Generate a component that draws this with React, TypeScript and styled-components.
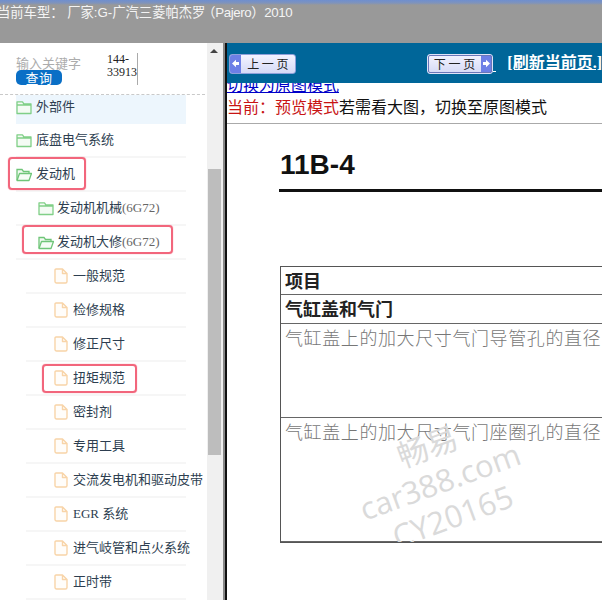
import React from "react";
import styled, { createGlobalStyle } from "styled-components";

const CJK = `"Noto Sans CJK SC", "Liberation Sans", sans-serif`;
const MIXED = `"Liberation Serif", "Noto Sans CJK SC", serif`;

const Global = createGlobalStyle`
  html, body { margin: 0; padding: 0; background: #fff; }
  body { width: 602px; height: 600px; overflow: hidden; font-family: ${CJK}; }
`;

const Page = styled.div`
  width: 602px;
  height: 600px;
  overflow: hidden;
  display: flex;
  flex-direction: column;
`;

const TopBar = styled.div`
  height: 43px;
  flex: none;
  box-sizing: border-box;
  background: linear-gradient(#6f8fcf 0, #7f93bb 3px, #999 5px);
  color: #f4f4f4;
  font-family: "Liberation Sans", "Noto Sans CJK SC", sans-serif;
  font-size: 13.3px;
  line-height: 25px;
  white-space: nowrap;
  text-indent: -3px;
  overflow: hidden;
`;

const ModelName = styled.span`
  letter-spacing: -0.4px;
  margin-left: -3px;
`;

const Main = styled.div`
  flex: 1;
  display: flex;
  min-height: 0;
`;

const Sidebar = styled.aside`
  width: 207px;
  flex: none;
  overflow: hidden;
`;

const Search = styled.div`
  height: 52px;
  box-sizing: border-box;
  border-bottom: 1px dashed #c9c9c9;
  margin-right: 2px;
  padding: 10px 0 0 16px;
  display: flex;
`;

const SearchLeft = styled.div`
  width: 91px;
  flex: none;
  padding-top: 3px;
`;

const Hint = styled.div`
  color: #acacac;
  font-size: 13px;
  line-height: 14px;
`;

const QueryButton = styled.div`
  width: 46px;
  height: 15px;
  border-radius: 5px;
  background: #0a6fc6;
  color: #fff;
  font-size: 13px;
  line-height: 15px;
  text-align: center;
  letter-spacing: 0.5px;
`;

const Code = styled.div`
  width: 30px;
  height: 32px;
  border-right: 1px solid #aaa;
  font-family: "Liberation Serif", serif;
  font-size: 12px;
  line-height: 12.5px;
  color: #222;
  word-break: break-word;
`;

const Row = styled.div<{ $level: number; $active?: boolean; $clip?: boolean }>`
  position: relative;
  box-sizing: border-box;
  height: ${(p) => (p.$clip ? 29 : 34)}px;
  width: ${(p) => (p.$level === 2 ? 160 : 170)}px;
  margin-left: ${(p) => (p.$level === 2 ? 26 : 16)}px;
  padding-left: ${(p) => (p.$level === 0 ? 0 : p.$level === 1 ? 22 : 28)}px;
  padding-bottom: ${(p) => (p.$clip ? 5 : 0)}px;
  display: flex;
  align-items: center;
  gap: ${(p) => (p.$level === 0 ? 4 : p.$level === 1 ? 3 : 5)}px;
  background: ${(p) => (p.$active ? "#edf6fd" : "transparent")};
  border-bottom: ${(p) => (p.$active ? "0" : "2px solid #f6f6f6")};
  white-space: nowrap;
  color: #2d3e50;
  font-family: ${MIXED};
  font-size: 13px;
  line-height: 16px;
`;

const Suffix = styled.span`
  color: #666;
`;

const Highlight = styled.div<{ $left: number; $width: number; $top: number; $height: number }>`
  position: absolute;
  left: ${(p) => p.$left}px;
  top: ${(p) => p.$top}px;
  width: ${(p) => p.$width}px;
  height: ${(p) => p.$height}px;
  box-sizing: border-box;
  border: 2.5px solid #f2667c;
  border-radius: 4px;
  box-shadow: 0 0 1px #f2667c;
`;

const Track = styled.div`
  width: 16px;
  flex: none;
  background: #f0f0f0;
  display: flex;
  flex-direction: column;
  align-items: center;
  padding: 6px 2px 0 0;
  box-sizing: border-box;
`;

const Arrow = styled.div`
  width: 0;
  height: 0;
  border-left: 4px solid transparent;
  border-right: 4px solid transparent;
  border-bottom: 4px solid #444;
`;

const Thumb = styled.div`
  width: 13px;
  height: 286px;
  margin-top: 116px;
  background: #bdbdbd;
`;

const Divider = styled.div`
  width: 4px;
  flex: none;
  background: linear-gradient(90deg, #888 0, #888 2px, #111 2px, #111 4px);
`;

const Content = styled.main`
  flex: 1;
  min-width: 0;
  overflow: hidden;
`;

const NavBar = styled.div`
  height: 40px;
  background: #006699;
  display: flex;
  align-items: center;
  padding: 0 0 0 2px;
  white-space: nowrap;
`;

const NavButton = styled.div<{ $next?: boolean }>`
  width: 67px;
  height: 20px;
  box-sizing: border-box;
  margin-top: 1px;
  margin-left: ${(p) => (p.$next ? "131px" : "0")};
  border: 1px solid ${(p) => (p.$next ? "#dfe3f8" : "#8ea0da")};
  outline: ${(p) => (p.$next ? "1px solid #6a76b8" : "none")};
  outline-offset: -2px;
  border-radius: 3px;
  background: linear-gradient(#f3f3ff, #d5daf6);
  display: flex;
  flex-direction: ${(p) => (p.$next ? "row-reverse" : "row")};
  align-items: center;
  overflow: hidden;
  color: #222;
  font-size: 12px;
`;

const NavIcon = styled.div`
  width: 11px;
  height: 100%;
  flex: none;
  background: #6d7fe6;
  display: flex;
  align-items: center;
  justify-content: center;
`;

const NavLabel = styled.div`
  flex: 1;
  text-align: center;
  white-space: pre;
  line-height: 16px;
`;

const NavUnder = styled.span`
  display: inline-block;
  align-self: flex-end;
  width: 3px;
  height: 1px;
  margin: 0 0 11px 0;
  background: #fff;
`;

const Refresh = styled.a`
  margin-left: 11px;
  color: #fff;
  font-weight: 700;
  font-size: 16px;
  text-decoration: underline;
  line-height: 18px;
  font-family: ${MIXED};
`;

const ClipTop = styled.div`
  height: 11px;
  overflow: hidden;
`;

const SwitchLink = styled.a`
  display: block;
  height: 14px;
  margin-top: -6px;
  color: #0000c8;
  font-size: 16px;
  line-height: 14px;
  text-decoration: underline;
  white-space: nowrap;
`;

const ModeLine = styled.div`
  height: 30px;
  box-sizing: border-box;
  border-bottom: 1px solid #aaa;
  padding-top: 2px;
  font-size: 16px;
  line-height: 20px;
  color: #111;
  white-space: nowrap;
`;

const Red = styled.span`
  color: #c81414;
`;

const Doc = styled.div`
  padding: 26px 0 0 52px;
  width: 380px;
`;

const DocTitle = styled.div`
  font-family: "Liberation Sans", sans-serif;
  font-weight: 700;
  font-size: 28px;
  line-height: 30px;
  padding-left: 1px;
  color: #111;
`;

const DocRule = styled.div`
  height: 3px;
  background: #111;
  margin-top: 9px;
`;

const DocTable = styled.div`
  position: relative;
  overflow: hidden;
  margin-top: 74px;
  margin-left: 1px;
  border: solid #555;
  border-width: 1.5px 0 1.5px 1.5px;
`;

const DocRow = styled.div<{ $h: number; $head?: boolean }>`
  height: ${(p) => p.$h}px;
  box-sizing: border-box;
  padding-left: 4px;
  border-bottom: 1px solid #666;
  font-size: 18px;
  line-height: 26px;
  white-space: nowrap;
  color: ${(p) => (p.$head ? "#222" : "#777")};
  font-weight: ${(p) => (p.$head ? 700 : 300)};
  letter-spacing: ${(p) => (p.$head ? 0 : 0.6)}px;
  &:last-child { border-bottom: 0; }
`;

const Watermark = styled.div`
  position: absolute;
  left: 64px;
  top: 159px;
  width: 190px;
  transform: rotate(-20deg);
  text-align: center;
  color: #dadada;
  font-family: "Open Sans", "Noto Sans CJK SC", sans-serif;
  font-size: 31px;
  line-height: 37px;
  white-space: nowrap;
`;

const FolderIcon = ({ open }: { open?: boolean }) => (
  <svg width="16" height="15" viewBox="0 0 16 15" style={{ flex: "none" }}>
    {open ? (
      <>
        <path d="M1 13V2.5h5l1.5 2H13V6" fill="#f2faf2" stroke="#6fc578" strokeWidth="1.3" />
        <path d="M1 13.5 3.5 6.5H15.5L13 13.5Z" fill="#f6fcf6" stroke="#6fc578" strokeWidth="1.3" strokeLinejoin="round" />
      </>
    ) : (
      <path d="M1 13.5V1.8h5.5l1.3 2H15v9.7Z M1 5h14" fill="#f4fbf4" stroke="#80cf87" strokeWidth="1.3" strokeLinejoin="round" />
    )}
  </svg>
);

const FileIcon = () => (
  <svg width="14" height="16" viewBox="0 0 14 16" style={{ flex: "none" }}>
    <path
      d="M2 1h6.5L13 5.5V13.5a1.5 1.5 0 0 1-1.5 1.5H2.5A1.5 1.5 0 0 1 1 13.5V2a1 1 0 0 1 1-1Z M8.5 1v4.5H13"
      fill="#fffdfa"
      stroke="#f8d4a8"
      strokeWidth="1.4"
      strokeLinejoin="round"
    />
  </svg>
);

const ArrowIcon = ({ right }: { right?: boolean }) => (
  <svg width="9" height="9" viewBox="0 0 9 9">
    <path d={right ? "M1 3h3V.8L8 4.5 4 8.2V6H1Z" : "M8 3H5V.8L1 4.5 5 8.2V6h3Z"} fill="#fff" />
  </svg>
);

type Item = {
  label: string;
  suffix?: string;
  level: 0 | 1 | 2;
  open?: boolean;
  hl?: { left: number; top: number; width: number; height: number };
};

const items: Item[] = [
  { label: "底盘电气系统", level: 0 },
  { label: "发动机", level: 0, open: true, hl: { left: -8, top: -1, width: 78, height: 33 } },
  { label: "发动机机械", suffix: "(6G72)", level: 1 },
  { label: "发动机大修", suffix: "(6G72)", level: 1, open: true, hl: { left: 6, top: -1, width: 151, height: 29 } },
  { label: "一般规范", level: 2 },
  { label: "检修规格", level: 2 },
  { label: "修正尺寸", level: 2 },
  { label: "扭矩规范", level: 2, hl: { left: 16, top: 2, width: 95, height: 29 } },
  { label: "密封剂", level: 2 },
  { label: "专用工具", level: 2 },
  { label: "交流发电机和驱动皮带", level: 2 },
  { label: "EGR 系统", level: 2 },
  { label: "进气岐管和点火系统", level: 2 },
  { label: "正时带", level: 2 },
];

export default function App() {
  return (
    <Page>
      <Global />
      <TopBar>
        当前车型： 厂家:G-广汽三菱帕杰罗<ModelName>（Pajero）2010</ModelName>
      </TopBar>
      <Main>
        <Sidebar>
          <Search>
            <SearchLeft>
              <Hint>输入关键字</Hint>
              <QueryButton>查询</QueryButton>
            </SearchLeft>
            <Code>144-33913</Code>
          </Search>
          <Row $level={0} $active $clip>
            <FolderIcon />
            外部件
          </Row>
          {items.map((it) => (
            <Row key={it.label} $level={it.level}>
              {it.level === 2 ? <FileIcon /> : <FolderIcon open={it.open} />}
              <span>
                {it.label}
                {it.suffix && <Suffix>{it.suffix}</Suffix>}
              </span>
              {it.hl && <Highlight $left={it.hl.left} $top={it.hl.top} $width={it.hl.width} $height={it.hl.height} />}
            </Row>
          ))}
        </Sidebar>
        <Track>
          <Arrow />
          <Thumb />
        </Track>
        <Divider />
        <Content>
          <NavBar>
            <NavButton>
              <NavIcon><ArrowIcon /></NavIcon>
              <NavLabel>上 一 页</NavLabel>
            </NavButton>
            <NavButton $next>
              <NavIcon><ArrowIcon right /></NavIcon>
              <NavLabel>下 一 页</NavLabel>
            </NavButton>
            <NavUnder />
            <Refresh>[刷新当前页.]</Refresh>
          </NavBar>
          <ClipTop>
            <SwitchLink>切换为原图模式</SwitchLink>
          </ClipTop>
          <ModeLine>
            <Red>当前：预览模式</Red>若需看大图，切换至原图模式
          </ModeLine>
          <Doc>
            <DocTitle>11B-4</DocTitle>
            <DocRule />
            <DocTable>
              <DocRow $h={28} $head>项目</DocRow>
              <DocRow $h={29} $head>气缸盖和气门</DocRow>
              <DocRow $h={94}>气缸盖上的加大尺寸气门导管孔的直径</DocRow>
              <DocRow $h={124}>气缸盖上的加大尺寸气门座圈孔的直径</DocRow>
              <Watermark>
                <div>畅易</div>
                <div>car388.com</div>
                <div>CY20165</div>
              </Watermark>
            </DocTable>
          </Doc>
        </Content>
      </Main>
    </Page>
  );
}
